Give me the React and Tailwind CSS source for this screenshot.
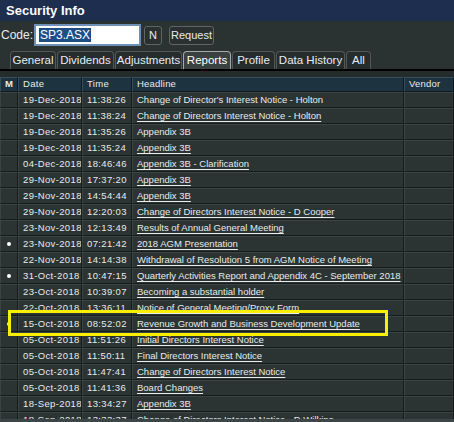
import React from 'react';

const rows = [
  ['19-Dec-2018', '11:38:26', "Change of Director's Interest Notice - Holton", false, false],
  ['19-Dec-2018', '11:38:24', 'Change of Directors Interest Notice - Holton', true, false],
  ['19-Dec-2018', '11:35:26', 'Appendix 3B', false, false],
  ['19-Dec-2018', '11:35:24', 'Appendix 3B', true, false],
  ['04-Dec-2018', '18:46:46', 'Appendix 3B - Clarification', true, false],
  ['29-Nov-2018', '17:37:20', 'Appendix 3B', true, false],
  ['29-Nov-2018', '14:54:44', 'Appendix 3B', true, false],
  ['29-Nov-2018', '12:20:03', 'Change of Directors Interest Notice - D Cooper', true, false],
  ['23-Nov-2018', '12:13:49', 'Results of Annual General Meeting', true, false],
  ['23-Nov-2018', '07:21:42', '2018 AGM Presentation', true, true],
  ['22-Nov-2018', '14:14:38', 'Withdrawal of Resolution 5 from AGM Notice of Meeting', true, false],
  ['31-Oct-2018', '10:47:15', 'Quarterly Activities Report and Appendix 4C - September 2018', true, true],
  ['23-Oct-2018', '10:39:07', 'Becoming a substantial holder', true, false],
  ['22-Oct-2018', '13:36:11', 'Notice of General Meeting/Proxy Form', true, false],
  ['15-Oct-2018', '08:52:02', 'Revenue Growth and Business Development Update', true, true],
  ['05-Oct-2018', '11:51:26', 'Initial Directors Interest Notice', true, false],
  ['05-Oct-2018', '11:50:11', 'Final Directors Interest Notice', true, false],
  ['05-Oct-2018', '11:47:41', 'Change of Directors Interest Notice', true, false],
  ['05-Oct-2018', '11:41:36', 'Board Changes', true, false],
  ['18-Sep-2018', '13:34:27', 'Appendix 3B', true, false],
  ['18-Sep-2018', '13:33:37', 'Change of Directors Interest Notice - D Wilkins', true, false],
];

const tabs = [
  ['General', 'w-[46px]'],
  ['Dividends', 'w-[57px]'],
  ['Adjustments', 'w-[67px]'],
  ['Reports', 'w-[48px]'],
  ['Profile', 'w-[43px]'],
  ['Data History', 'w-[69px]'],
  ['All', 'w-[25px]'],
];

const cell = 'border-t border-l border-t-[#3a4444] border-l-[#3a4444] border-r border-b border-r-[#161b1b] border-b-[#161b1b] overflow-hidden whitespace-nowrap';
const head = 'border-t border-l border-t-[#34505e] border-l-[#34505e] border-r border-b border-r-[#0f1a20] border-b-[#0f1a20] overflow-hidden whitespace-nowrap';

export default function App() {
  return (
    <div className="relative h-[422px] w-[454px] overflow-hidden bg-[#2b3232] text-[#e8ecec]" style={{ fontFamily: '"Liberation Sans", Arial, sans-serif' }}>
      {/* title */}
      <div className="flex h-[21px] items-center bg-[#1d2e4e] pl-[6px] text-[13px] font-bold text-white">Security Info</div>

      {/* code row */}
      <div className="flex h-[28px] items-center pl-[1px] text-[12px]">
        <span className="mr-[1px]">Code:</span>
        <div className="flex h-[22px] w-[107px] items-center border-2 border-[#6d8fb8] bg-white pl-[3px]">
          <span className="bg-[#1f4d86] px-[1px] text-[12px] leading-[14px] text-white">SP3.ASX</span>
        </div>
        <button className="ml-[3px] flex h-[19px] w-[18px] items-center justify-center rounded-[3px] border border-[#5e6666] bg-[#2a3030] text-[11px]">N</button>
        <button className="ml-[7px] flex h-[19px] w-[45px] items-center justify-center rounded-[3px] border border-[#5e6666] bg-[#2a3030] text-[11px]">Request</button>
      </div>

      {/* tabs */}
      <div className="mt-[2px] flex h-[18px] items-end gap-[1px] pl-[10px]">
        {tabs.map(([t, w]) => {
          const active = t === 'Reports';
          return (
            <div
              key={t}
              className={`flex h-[18px] ${w} items-center justify-center rounded-t-[4px] border border-b-0 text-[11.5px] ${
                active ? 'border-[#a4aaaa] bg-[#3a4141] text-white' : 'border-[#505858] bg-[#262c2c] text-[#e4ecf4]'
              }`}
            >
              {t}
            </div>
          );
        })}
      </div>
      <div className="h-[2px] bg-black" />
      <div className="h-[6px] bg-[#262c2c]" />

      {/* table */}
      <div className="grid grid-cols-[18px_64px_50px_272px_50px] text-[9.5px]">
        <div className={`${head} flex h-[15px] items-center justify-center bg-[#1d3340] font-bold`}>M</div>
        <div className={`${head} flex h-[15px] items-center bg-[#1d3340] pl-[4px] tracking-[0.35px]`}>Date</div>
        <div className={`${head} flex h-[15px] items-center bg-[#1d3340] pl-[4px] tracking-[0.35px]`}>Time</div>
        <div className={`${head} flex h-[15px] items-center bg-[#1d3340] pl-[4px] tracking-[0.2px]`}>Headline</div>
        <div className={`${head} flex h-[15px] items-center bg-[#1d3340] pl-[4px] tracking-[0.2px]`}>Vendor</div>
        {rows.map(([d, t, h, u, m], i) => (
          <React.Fragment key={i}>
            <div className={`${cell} flex h-[16px] items-center justify-center bg-[#2b3333]`}>
              {m && <span className="h-[4px] w-[4px] rounded-full bg-white" />}
            </div>
            <div className={`${cell} flex h-[16px] items-center bg-[#2b3333] pl-[4px] tracking-[0.35px]`}>{d}</div>
            <div className={`${cell} flex h-[16px] items-center bg-[#2b3333] pl-[4px] tracking-[0.35px]`}>{t}</div>
            <div className={`${cell} flex h-[16px] items-center bg-[#2b3333] pl-[4px]`}>
              <span className={u ? 'underline underline-offset-2' : ''}>{h}</span>
            </div>
            <div className={`${cell} h-[16px] bg-[#2b3333]`} />
          </React.Fragment>
        ))}
      </div>

      {/* bottom edge */}
      <div className="absolute bottom-0 left-0 h-[3px] w-full bg-[#3c4646]" />

      {/* highlight box */}
      <div className="absolute left-[8px] top-[310px] h-[26px] w-[380px] border-[3px] border-[#f8f000]" />
    </div>
  );
}
